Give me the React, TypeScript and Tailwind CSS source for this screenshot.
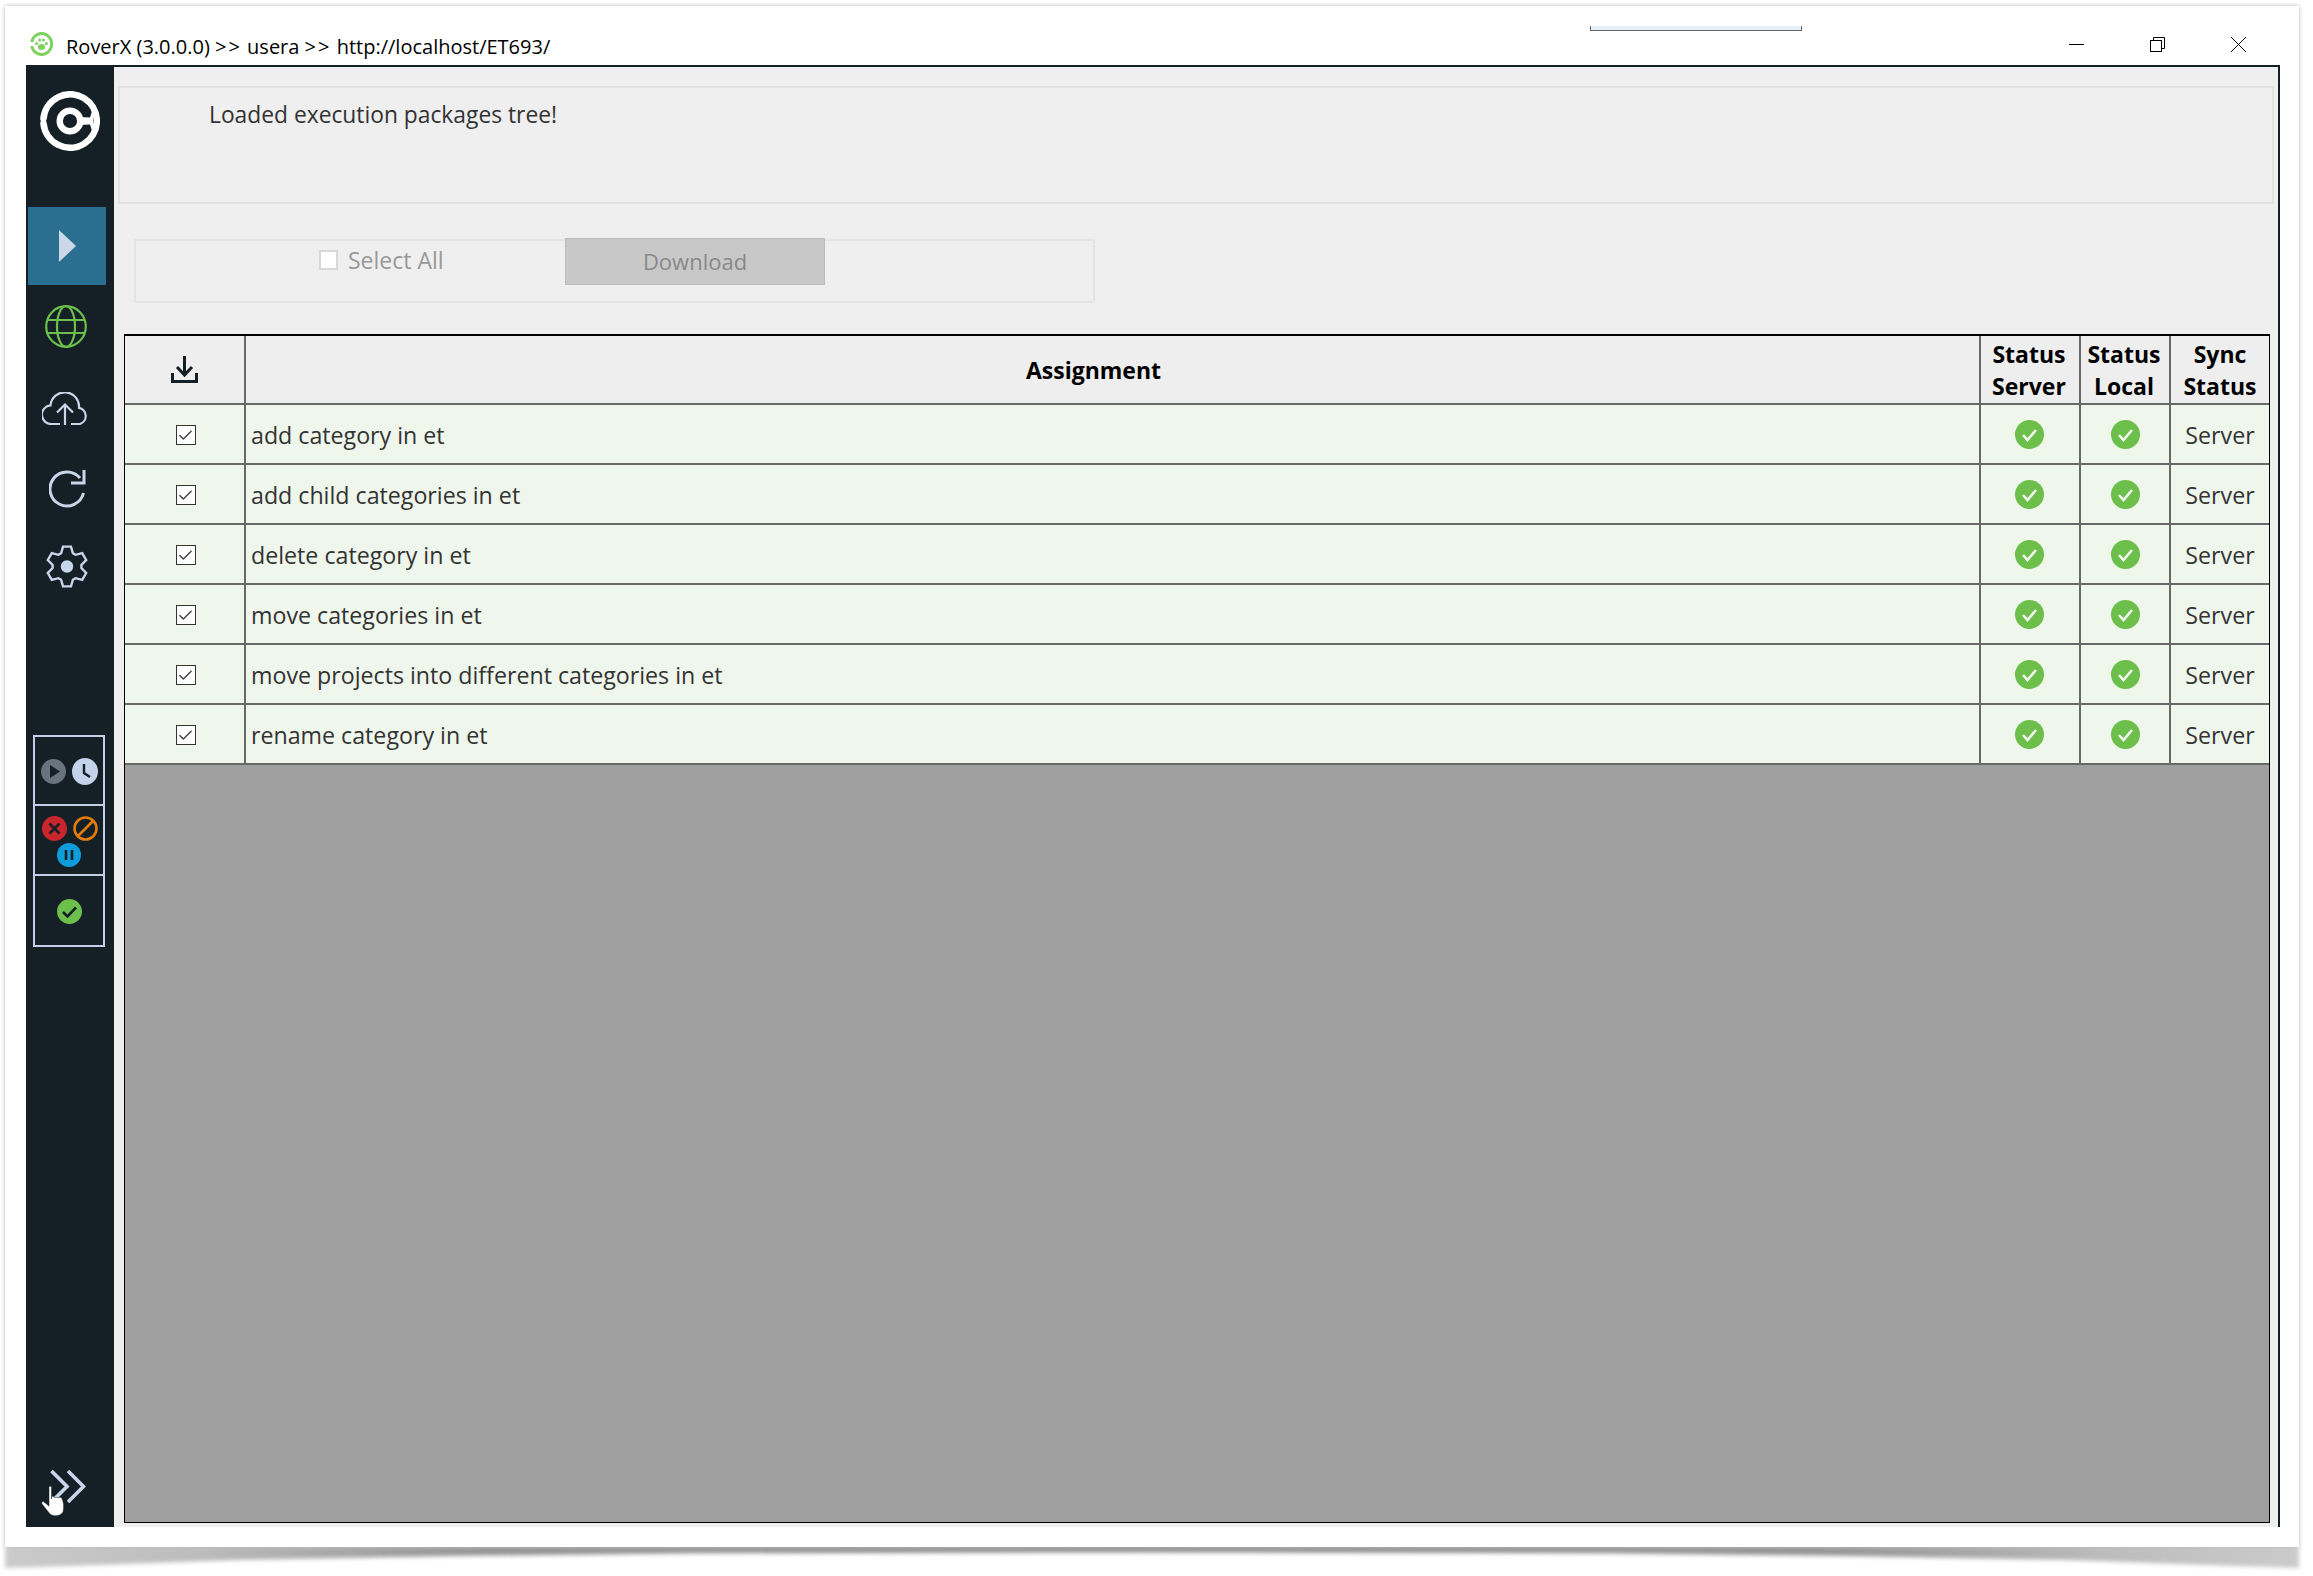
import { Check } from 'lucide-react';

const font = { fontFamily: '"Open Sans", "Noto Sans", sans-serif' };

const rows = [
  'add category in et',
  'add child categories in et',
  'delete category in et',
  'move categories in et',
  'move projects into different categories in et',
  'rename category in et',
];

const cols = 'grid grid-cols-[121px_1735px_100px_90px_98px]';

// six teeth, drawn round the centre of a 42x43 box
const gearPath =
  [0, 1, 2, 3, 4, 5]
    .map((i) => {
      const a = -Math.PI / 2 + (i * Math.PI) / 3;
      const pt = (r: number, d: number) =>
        `${(21 + r * Math.cos(a + d)).toFixed(1)} ${(21.5 + r * Math.sin(a + d)).toFixed(1)}`;
      return `${i === 0 ? 'M' : 'L'}${pt(14.5, -0.42)} L${pt(20.3, -0.2)} L${pt(20.3, 0.2)} L${pt(14.5, 0.42)}`;
    })
    .join(' ') + ' Z';

function Logo() {
  return (
    <svg width="60" height="60" viewBox="0 0 60 60" fill="none" stroke="#fff">
      <path d="M3.5 27.5 A26.7 26.7 0 1 1 3.5 32.5" strokeWidth="6.6" strokeLinecap="round" />
      <circle cx="30" cy="30" r="10.3" strokeWidth="6.4" />
      <path d="M39 26 L50 26.5 L53 17 V43 L50 33.5 L39 34 Z" fill="#fff" stroke="none" />
    </svg>
  );
}

function GreenCheck() {
  return (
    <svg width="29" height="29" viewBox="0 0 29 29">
      <circle cx="14.5" cy="14.5" r="14.5" fill="#6cbf4b" />
      <path d="M8 15 L12.5 20 L21 10" fill="none" stroke="#f2f8ee" strokeWidth="2.6" />
    </svg>
  );
}

function Row({ name }: { name: string }) {
  return (
    <div className={`${cols} h-[60px] bg-[#eff6ec] border-b-2 border-[#686868] text-[#333] text-[23.2px]`}>
      <div className="flex items-center justify-center pt-[2px] pl-[2px] border-r-2 border-[#686868]">
        <div className="w-[20px] h-[20px] bg-white border-[1.5px] border-[#333] flex items-center justify-center">
          <Check size={17} strokeWidth={2} color="#444" />
        </div>
      </div>
      <div className="flex items-center pl-[5px] pt-[2px] border-r-2 border-[#686868]">{name}</div>
      <div className="flex items-center justify-center pr-[1px] border-r-2 border-[#686868]"><GreenCheck /></div>
      <div className="flex items-center justify-center border-r-2 border-[#686868]"><GreenCheck /></div>
      <div className="flex items-center justify-center pt-[2px]">Server</div>
    </div>
  );
}

export default function App() {
  return (
    <div style={font} className="w-[2313px] h-[1576px] bg-white pt-[6px] pl-[5px] overflow-hidden">
      <div className="relative z-10 w-[2294px] h-[1541px] bg-white shadow-[0_0_4px_rgba(0,0,0,0.3)] flex flex-col">
        {/* title bar */}
        <div className="h-[59px] flex text-black">
          <svg className="ml-[25px] mt-[26px]" width="23" height="24" viewBox="0 0 23 24">
            <path d="M1.8 10 A10 10.5 0 1 1 1.8 14" fill="none" stroke="#7ed05f" strokeWidth="3" />
            <ellipse cx="11.5" cy="15" rx="3.6" ry="3" fill="#7ed05f" />
            <circle cx="6.6" cy="11.5" r="1.5" fill="#7ed05f" />
            <circle cx="9.6" cy="8" r="1.5" fill="#7ed05f" />
            <circle cx="13.4" cy="8" r="1.5" fill="#7ed05f" />
            <circle cx="16.4" cy="11.5" r="1.5" fill="#7ed05f" />
          </svg>
          <span className="ml-[13px] mt-[27px] text-[20px] leading-[28px]">
            RoverX (3.0.0.0) <span className="tracking-[2px]">&gt;&gt;</span> usera <span className="tracking-[2px]">&gt;&gt;</span> http://localhost/ET693/
          </span>
          <div className="ml-auto flex">
            <div className="w-[212px] h-[5px] mt-[20px] bg-[#e8f1f9] border-b border-x border-[#666]" />
            <div className="ml-[267px] w-[15px] h-[1px] mt-[38px] bg-black" />
            <svg className="ml-[66px] mt-[31px]" width="15" height="15" viewBox="0 0 15 15" fill="none" stroke="#000">
              <path d="M3.5 3.5 V0.5 H14.5 V11.5 H11.5" />
              <rect x="0.5" y="3.5" width="11" height="11" />
            </svg>
            <svg className="ml-[66px] mr-[53px] mt-[31px]" width="15" height="15" viewBox="0 0 15 15" stroke="#000">
              <path d="M0 0 L15 15 M15 0 L0 15" />
            </svg>
          </div>
        </div>

        {/* app */}
        <div className="ml-[21px] w-[2254px] h-[1462px] flex border-t-2 border-r-2 border-[#141f26] bg-[#efefef]">
          {/* sidebar */}
          <div className="w-[88px] h-full bg-[#141f26] flex flex-col relative">
            <div className="ml-[14px] mt-[24px]"><Logo /></div>
            <div className="ml-[2px] mt-[56px] w-[78px] h-[78px] bg-[#2a6f8f] flex items-center justify-center">
              <svg width="17" height="32" viewBox="0 0 17 32"><path d="M0 0 L17 16 L0 32 Z" fill="#cbd8ea" /></svg>
            </div>
            <svg className="ml-[19px] mt-[20px]" width="42" height="43" viewBox="0 0 42 43" fill="none" stroke="#6cbf4b" strokeWidth="2.2">
              <ellipse cx="21" cy="21.5" rx="19.8" ry="20.3" />
              <ellipse cx="21" cy="21.5" rx="9" ry="20.3" />
              <path d="M2.5 15 H39.5 M2.5 28 H39.5" />
            </svg>
            <svg className="ml-[16px] mt-[44px]" width="47" height="33" viewBox="0 0 47 33" fill="none" stroke="#c8d6ea" strokeWidth="2.2">
              <path d="M18 32 H10 A9.3 9.3 0 0 1 8.5 13.4 A14 14 0 0 1 37 15.8 A8.4 8.4 0 0 1 38 32 H29" />
              <path d="M23 33 V13 M15 20.5 L23 12.5 L31 20.5" />
            </svg>
            <svg className="ml-[23px] mt-[44px]" width="37" height="39" viewBox="0 0 37 39" fill="none" stroke="#c8d6ea" strokeWidth="3">
              <path d="M31 9 A17 17 0 1 0 34.5 24" />
              <path d="M35 1 V14 H22" />
            </svg>
            <svg className="ml-[20px] mt-[37px]" width="42" height="43" viewBox="0 0 42 43" fill="none" stroke="#c8d6ea" strokeWidth="2.4">
              <path d={gearPath} />
              <circle cx="21" cy="21.5" r="6.2" fill="#c8d6ea" stroke="none" />
            </svg>

            {/* status box */}
            <div className="ml-[7px] mt-[147px] w-[72px] h-[212px] border-2 border-[#c0cfe6] flex flex-col">
              <div className="h-[69px] border-b-2 border-[#c0cfe6] flex items-center justify-center gap-[6px] pt-[2px]">
                <svg width="25" height="25" viewBox="0 0 25 25">
                  <circle cx="12.5" cy="12.5" r="12.5" fill="#67737d" />
                  <path d="M9 6 L19 12.5 L9 19 Z" fill="#141f26" />
                </svg>
                <svg width="26" height="27" viewBox="0 0 26 27">
                  <ellipse cx="13" cy="13.5" rx="13" ry="13.5" fill="#c4d2ea" />
                  <path d="M12 6 V15 L18 19" fill="none" stroke="#141f26" strokeWidth="2.4" />
                </svg>
              </div>
              <div className="h-[70px] border-b-2 border-[#c0cfe6] flex flex-col items-center justify-center pt-[3px]">
                <div className="flex gap-[6px] pl-[2px]">
                  <svg width="25" height="25" viewBox="0 0 25 25">
                    <circle cx="12.5" cy="12.5" r="12.5" fill="#c9252c" />
                    <path d="M7.5 7.5 L17.5 17.5 M17.5 7.5 L7.5 17.5" stroke="#141f26" strokeWidth="2.6" />
                  </svg>
                  <svg width="25" height="25" viewBox="0 0 25 25" fill="none" stroke="#e07c0c" strokeWidth="2.6">
                    <circle cx="12.5" cy="12.5" r="11" />
                    <path d="M5 20 L20 5" />
                  </svg>
                </div>
                <svg className="mt-[2px]" width="24" height="24" viewBox="0 0 24 24">
                  <circle cx="12" cy="12" r="12" fill="#0d9ddb" />
                  <path d="M9 7 V17 M15 7 V17" stroke="#141f26" strokeWidth="2.6" />
                </svg>
              </div>
              <div className="flex-1 flex items-center justify-center pt-[2px]">
                <svg width="25" height="25" viewBox="0 0 25 25">
                  <circle cx="12.5" cy="12.5" r="12.5" fill="#6cbf4b" />
                  <path d="M6 13 L10.5 17.5 L19 8.5" fill="none" stroke="#141f26" strokeWidth="2.6" />
                </svg>
              </div>
            </div>

            <svg className="ml-[24px] mt-[523px]" width="36" height="33" viewBox="0 0 36 33" fill="none" stroke="#c8d6ea" strokeWidth="3.6">
              <path d="M1.5 1 L17 16.5 L1.5 32 M18 1 L33.5 16.5 L18 32" />
            </svg>
            {/* mouse pointer lying over the button */}
            <svg className="absolute left-[15px] top-[1419px]" width="24" height="31" viewBox="0 0 24 31">
              <path d="M8 1 C8 0 10.5 0 10.5 1 V13 L10.5 11 C11 10 12 10 13 11 L14 12 C15 11 16 11 17 12 C18 11 20 11 21 12.5 C23 17 23 22 22 26 C20 30 13 31 9 28 L1 18 C0 16 2 15 3 16 L8 20 Z" fill="#fff" stroke="#141f26" strokeWidth="0.5" />
            </svg>
          </div>

          {/* content */}
          <div className="flex-1 flex flex-col pt-[19px]">
            <div className="ml-[4px] mr-[4px] h-[118px] border-2 border-[#e2e2e2] pl-[89px] pt-[11px] text-[#333] text-[22.8px] leading-[32px]">
              Loaded execution packages tree!
            </div>
            <div className="ml-[20px] mt-[35px] w-[961px] h-[64px] border-2 border-[#e4e4e4] flex items-start">
              <div className="w-[429px] flex pl-[183px] pt-[3px] items-center gap-[10px] text-[#999] text-[23px] leading-[32px]">
                <div className="w-[19px] h-[20px] bg-white border-2 border-[#d8d8d8]" />
                <span>Select All</span>
              </div>
              <div className="w-[260px] h-[47px] -mt-[3px] bg-[#c8c8c8] border border-[#bcbcbc] flex items-center justify-center text-[#888] text-[22px]">
                Download
              </div>
            </div>
            <div className="ml-[10px] mt-[31px] w-[2146px] h-[1189px] border-x border-b border-t-2 border-black bg-[#a0a0a0] flex flex-col">
              <div className={`${cols} h-[69px] bg-[#eeeeee] border-b-2 border-[#686868] text-black font-bold text-[23px] leading-[32px] text-center`}>
                <div className="flex items-center justify-center border-r-2 border-[#686868]">
                  <svg width="27" height="27" viewBox="0 0 27 27" fill="none" stroke="#141f26" strokeWidth="3">
                    <path d="M13.5 0 V18 M6 11 L13.5 19 L21 11" />
                    <path d="M1.5 17 V25.5 H25.5 V17" />
                  </svg>
                </div>
                <div className="flex items-center justify-center pr-[38px] border-r-2 border-[#686868]">Assignment</div>
                <div className="flex items-center justify-center pr-[2px] border-r-2 border-[#686868]">Status<br />Server</div>
                <div className="flex items-center justify-center pr-[2px] border-r-2 border-[#686868]">Status<br />Local</div>
                <div className="flex items-center justify-center">Sync<br />Status</div>
              </div>
              {rows.map((name) => (
                <Row key={name} name={name} />
              ))}
            </div>
          </div>
        </div>
      </div>
      {/* drop shadow strip under the window */}
      <div className="w-[2294px] h-[21px] blur-[2px]">
        <div className="h-full bg-[linear-gradient(to_right,#cbcbcb,#bdbdbd_8%,#969696_20%,#888888_50%,#969696_80%,#bdbdbd_92%,#cbcbcb)] [clip-path:polygon(0_0,100%_0,100%_100%,95%_82%,90%_62%,80%_42%,70%_30%,50%_25%,30%_30%,20%_42%,10%_62%,5%_82%,0_100%)]" />
      </div>
    </div>
  );
}
